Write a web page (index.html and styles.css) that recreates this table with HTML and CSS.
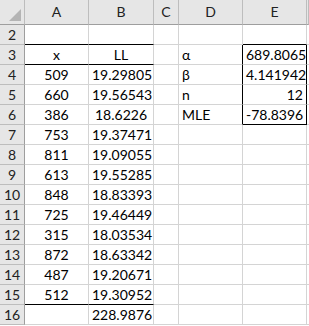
FILE: index.html
```html
<!DOCTYPE html>
<html lang="en-us">
  <head>
    <meta charset="utf-8" />
    <title>MLE sheet</title>
    <link rel="stylesheet" href="styles.css">
  </head>

  <body>
    <div class="sheet">
      <div class="row head">
        <div class="corner"><span class="tri"></span></div>
        <div class="col">A</div>
        <div class="col">B</div>
        <div class="col">C</div>
        <div class="col">D</div>
        <div class="col">E</div>
        <div class="col"></div>
      </div>

      <div class="row">
        <div class="num">2</div>
        <div class="cell under"></div>
        <div class="cell under"></div>
        <div class="cell"></div>
        <div class="cell"></div>
        <div class="cell under"></div>
        <div class="cell"></div>
      </div>

      <div class="row">
        <div class="num">3</div>
        <div class="cell mid under">x</div>
        <div class="cell mid under">LL</div>
        <div class="cell"></div>
        <div class="cell box-left">&alpha;</div>
        <div class="cell right box">689.8065</div>
        <div class="cell"></div>
      </div>

      <div class="row">
        <div class="num">4</div>
        <div class="cell mid">509</div>
        <div class="cell mid">19.29805</div>
        <div class="cell"></div>
        <div class="cell box-left">&beta;</div>
        <div class="cell right box">4.141942</div>
        <div class="cell"></div>
      </div>

      <div class="row">
        <div class="num">5</div>
        <div class="cell mid">660</div>
        <div class="cell mid">19.56543</div>
        <div class="cell"></div>
        <div class="cell box-left">n</div>
        <div class="cell right box">12</div>
        <div class="cell"></div>
      </div>

      <div class="row">
        <div class="num">6</div>
        <div class="cell mid">386</div>
        <div class="cell mid">18.6226</div>
        <div class="cell"></div>
        <div class="cell box-left">MLE</div>
        <div class="cell right box under">-78.8396</div>
        <div class="cell"></div>
      </div>

      <div class="row">
        <div class="num">7</div>
        <div class="cell mid">753</div>
        <div class="cell mid">19.37471</div>
        <div class="cell"></div><div class="cell"></div><div class="cell"></div><div class="cell"></div>
      </div>

      <div class="row">
        <div class="num">8</div>
        <div class="cell mid">811</div>
        <div class="cell mid">19.09055</div>
        <div class="cell"></div><div class="cell"></div><div class="cell"></div><div class="cell"></div>
      </div>

      <div class="row">
        <div class="num">9</div>
        <div class="cell mid">613</div>
        <div class="cell mid">19.55285</div>
        <div class="cell"></div><div class="cell"></div><div class="cell"></div><div class="cell"></div>
      </div>

      <div class="row">
        <div class="num">10</div>
        <div class="cell mid">848</div>
        <div class="cell mid">18.83393</div>
        <div class="cell"></div><div class="cell"></div><div class="cell"></div><div class="cell"></div>
      </div>

      <div class="row">
        <div class="num">11</div>
        <div class="cell mid">725</div>
        <div class="cell mid">19.46449</div>
        <div class="cell"></div><div class="cell"></div><div class="cell"></div><div class="cell"></div>
      </div>

      <div class="row">
        <div class="num">12</div>
        <div class="cell mid">315</div>
        <div class="cell mid">18.03534</div>
        <div class="cell"></div><div class="cell"></div><div class="cell"></div><div class="cell"></div>
      </div>

      <div class="row">
        <div class="num">13</div>
        <div class="cell mid">872</div>
        <div class="cell mid">18.63342</div>
        <div class="cell"></div><div class="cell"></div><div class="cell"></div><div class="cell"></div>
      </div>

      <div class="row">
        <div class="num">14</div>
        <div class="cell mid">487</div>
        <div class="cell mid">19.20671</div>
        <div class="cell"></div><div class="cell"></div><div class="cell"></div><div class="cell"></div>
      </div>

      <div class="row">
        <div class="num">15</div>
        <div class="cell mid under">512</div>
        <div class="cell mid under">19.30952</div>
        <div class="cell"></div><div class="cell"></div><div class="cell"></div><div class="cell"></div>
      </div>

      <div class="row">
        <div class="num">16</div>
        <div class="cell mid"></div>
        <div class="cell mid">228.9876</div>
        <div class="cell"></div><div class="cell"></div><div class="cell"></div><div class="cell"></div>
      </div>
    </div>
  </body>
</html>
```

FILE: styles.css
```css
html {
  font-family: Lato, "Liberation Sans", sans-serif;
  font-size: 14px;
  color: #000;
}

body {
  margin: 0;
  background: #fff;
}

.sheet {
  width: 309px;
  overflow: hidden;
}

.row {
  display: grid;
  grid-template-columns: 25px 64px 65px 25px 64px 64px 2px;
  height: 20px;
}

.row > div {
  box-sizing: border-box;
  border-right: 1px solid #d4d4d4;
  border-bottom: 1px solid #d4d4d4;
  line-height: 19px;
  white-space: nowrap;
  overflow: hidden;
}

/* column headers */
.head {
  height: 25px;
}

.head > div {
  background: #e6e6e6;
  border-right-color: #bdbdbd;
  border-bottom-color: #9e9e9e;
  line-height: 24px;
  text-align: center;
  color: #222;
}

.corner {
  position: relative;
}

.tri {
  position: absolute;
  right: 3px;
  bottom: 3px;
  width: 0;
  height: 0;
  border-left: 12px solid transparent;
  border-bottom: 12px solid #b4b4b4;
}

/* row numbers */
.row > .num {
  background: #e6e6e6;
  border-right-color: #9e9e9e;
  border-bottom-color: #bdbdbd;
  text-align: center;
  color: #222;
}

.cell {
  padding: 0 3px;
}

.mid {
  text-align: center;
}

.right {
  text-align: right;
}

.row > .under {
  border-bottom-color: #000;
}

.row > .box-left {
  border-right-color: #000;
}

.row > .box {
  border-right-color: #000;
}
```
